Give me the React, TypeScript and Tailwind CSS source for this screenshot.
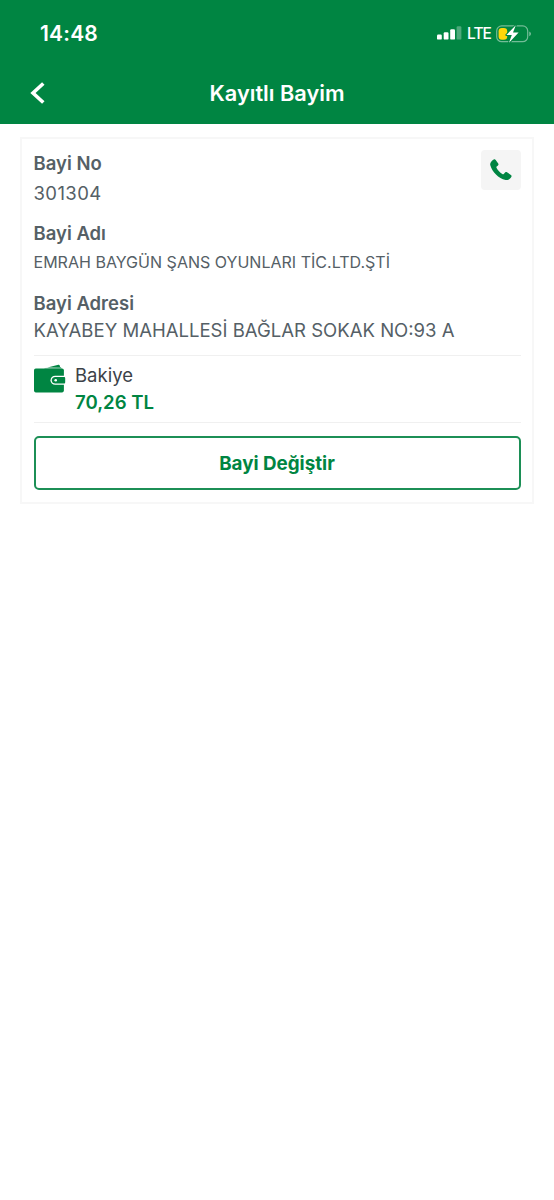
const dealer = {
  no: "301304",
  name: "EMRAH BAYGÜN ŞANS OYUNLARI TİC.LTD.ŞTİ",
  address: "KAYABEY MAHALLESİ BAĞLAR SOKAK NO:93 A",
  balance: "70,26 TL",
};

function SignalIcon() {
  return (
    <svg width="25" height="15" viewBox="0 0 25 15" fill="#fff">
      <rect x="0" y="8.6" width="4.8" height="5" rx="1.2" />
      <rect x="6.7" y="6.3" width="4.8" height="7.3" rx="1.2" />
      <rect x="13.2" y="3.2" width="4.8" height="10.4" rx="1.2" />
      <rect x="19.6" y="0.2" width="4.8" height="13.4" rx="1.2" opacity="0.3" />
    </svg>
  );
}

function BatteryIcon() {
  return (
    <svg width="36" height="20" viewBox="0 0 36 20">
      <rect x="0.7" y="1.9" width="31" height="15.8" rx="5" fill="none" stroke="#fff" strokeOpacity="0.45" strokeWidth="1.2" />
      <path d="M33.3 7.4v4.8c1-.4 1.6-1.3 1.6-2.4s-.6-2-1.6-2.4z" fill="#fff" fillOpacity="0.5" />
      <rect x="2.6" y="3.9" width="8.6" height="11.8" rx="3.3" fill="#ffd60a" />
      <path d="M19.8 1.2 10.4 11h5.4L13 18.7 22.6 8.5H17z" fill="#fff" stroke="#008542" strokeWidth="2" strokeLinejoin="round" paintOrder="stroke" />
    </svg>
  );
}

function WalletIcon() {
  return (
    <svg width="32" height="30" viewBox="0 0 32 30">
      <path d="M13.5 3.6 24.4.7c.6-.2 1 .1 1.2.6l.7 2.3z" fill="#008542" />
      <path d="M11 4 26.500 3l1.400 1.600H10z" fill="#4da87b" />
      <path d="M1.8 4.600h26.200c1.100 0 1.900.8 1.900 1.900v20c0 1.100-.8 1.900-1.900 1.900H1.800c-1.100 0-1.800-.8-1.800-1.900v-20c0-1.100.7-1.900 1.800-1.900z" fill="#008542" />
      <path d="M32 11.800H21.200c-2.700 0-4.700 1.800-4.700 4.500s2 4.500 4.700 4.500H32z" fill="#fff" />
      <path d="M21.200 13h8.700c.8 0 1.300.5 1.300 1.300v4c0 .8-.5 1.300-1.300 1.300h-8.700c-2 0-3.500-1.300-3.500-3.300s1.500-3.300 3.500-3.300z" fill="#008542" />
      <circle cx="21.700" cy="16.300" r="1.300" fill="#fff" />
    </svg>
  );
}

function PhoneIcon() {
  return (
    <svg width="22" height="22" viewBox="0 0 22 22" fill="#008542">
      <path d="M3.7.5c.7-.5 1.500-.3 2 .4l2.500 3.500c.5.7.4 1.500-.2 2L6.700 7.600c-.4.4-.4.9-.1 1.500 1.300 2.500 3.200 4.500 5.700 5.900.6.3 1 .3 1.400-.1l1.400-1.400c.5-.5 1.300-.6 1.900-.2l3.900 2.600c.7.5.9 1.300.4 2-1.400 2.300-3.400 3.600-5.700 3.100C8.500 19.500 2.200 13.100.3 6.300-.3 4 1.300 1.900 3.700.5z" />
    </svg>
  );
}

export default function App() {
  return (
    <div className="min-h-[1200px] w-full bg-white font-['Inter',sans-serif] text-[#556066]">
      {/* Status bar and title */}
      <header className="h-[123.5px] bg-[#008542] text-white">
        <div className="flex h-[67px] items-center pl-[40px] pr-[22px]">
          <span className="text-[21px] font-semibold leading-6 tracking-[0.2px]">14:48</span>
          <div className="ml-auto flex items-center">
            <SignalIcon />
            <span className="ml-[5px] mr-[4px] w-[25px] whitespace-nowrap text-[15.5px] font-medium leading-6 tracking-[-0.9px]">LTE</span>
            <BatteryIcon />
          </div>
        </div>
        <div className="grid h-[52px] grid-cols-[80px_1fr_80px] items-center">
          <button aria-label="Geri" className="pl-[30px]">
            <svg width="16" height="22" viewBox="0 0 16 22" fill="none" stroke="#fff" strokeWidth="3.6">
              <path d="M13.3 1.500 3 11l10.300 9.500" />
            </svg>
          </button>
          <h1 className="text-center text-[21.75px] font-semibold leading-7">Kayıtlı Bayim</h1>
        </div>
      </header>

      {/* Dealer card */}
      <main className="mx-5 mt-[13px] h-[367px] border-2 border-[#f7f7f7] px-[11.5px] pt-[11.5px]">
        <div className="flex h-[59px] justify-between">
          <div className="-mt-px">
            <h2 className="text-[18.5px] font-semibold leading-7">Bayi No</h2>
            <p className="mt-[1px] text-[18.5px] leading-[30px] tracking-[0.4px]">{dealer.no}</p>
          </div>
          <button aria-label="Ara" className="flex size-10 items-center justify-center rounded-[4px] bg-[#f5f5f5]">
            <PhoneIcon />
          </button>
        </div>

        <h2 className="mt-[10px] text-[18.5px] font-semibold leading-7">Bayi Adı</h2>
        <p className="mt-[1px] whitespace-nowrap text-[16.05px] leading-[29px]">{dealer.name}</p>

        <h2 className="mt-[12px] text-[18.5px] font-semibold leading-7">Bayi Adresi</h2>
        <p className="whitespace-nowrap text-[18.55px] leading-[27px]">{dealer.address}</p>

        <div className="mt-[11px] flex h-[68px] border-y border-[#f0f0f0] pt-[8px]">
          <WalletIcon />
          <div className="ml-[9.5px] -mt-px">
            <p className="text-[18.5px] leading-[24px] text-[#3c4248]">Bakiye</p>
            <p className="mt-[0.5px] text-[18.6px] font-semibold leading-7 text-[#008542]">{dealer.balance}</p>
          </div>
        </div>

        <button className="mt-[13px] h-[54px] w-full rounded-[5px] border-2 border-[#1c8f56] pt-[1.5px] text-[18.8px] font-bold text-[#008542]">
          Bayi Değiştir
        </button>
      </main>
    </div>
  );
}
